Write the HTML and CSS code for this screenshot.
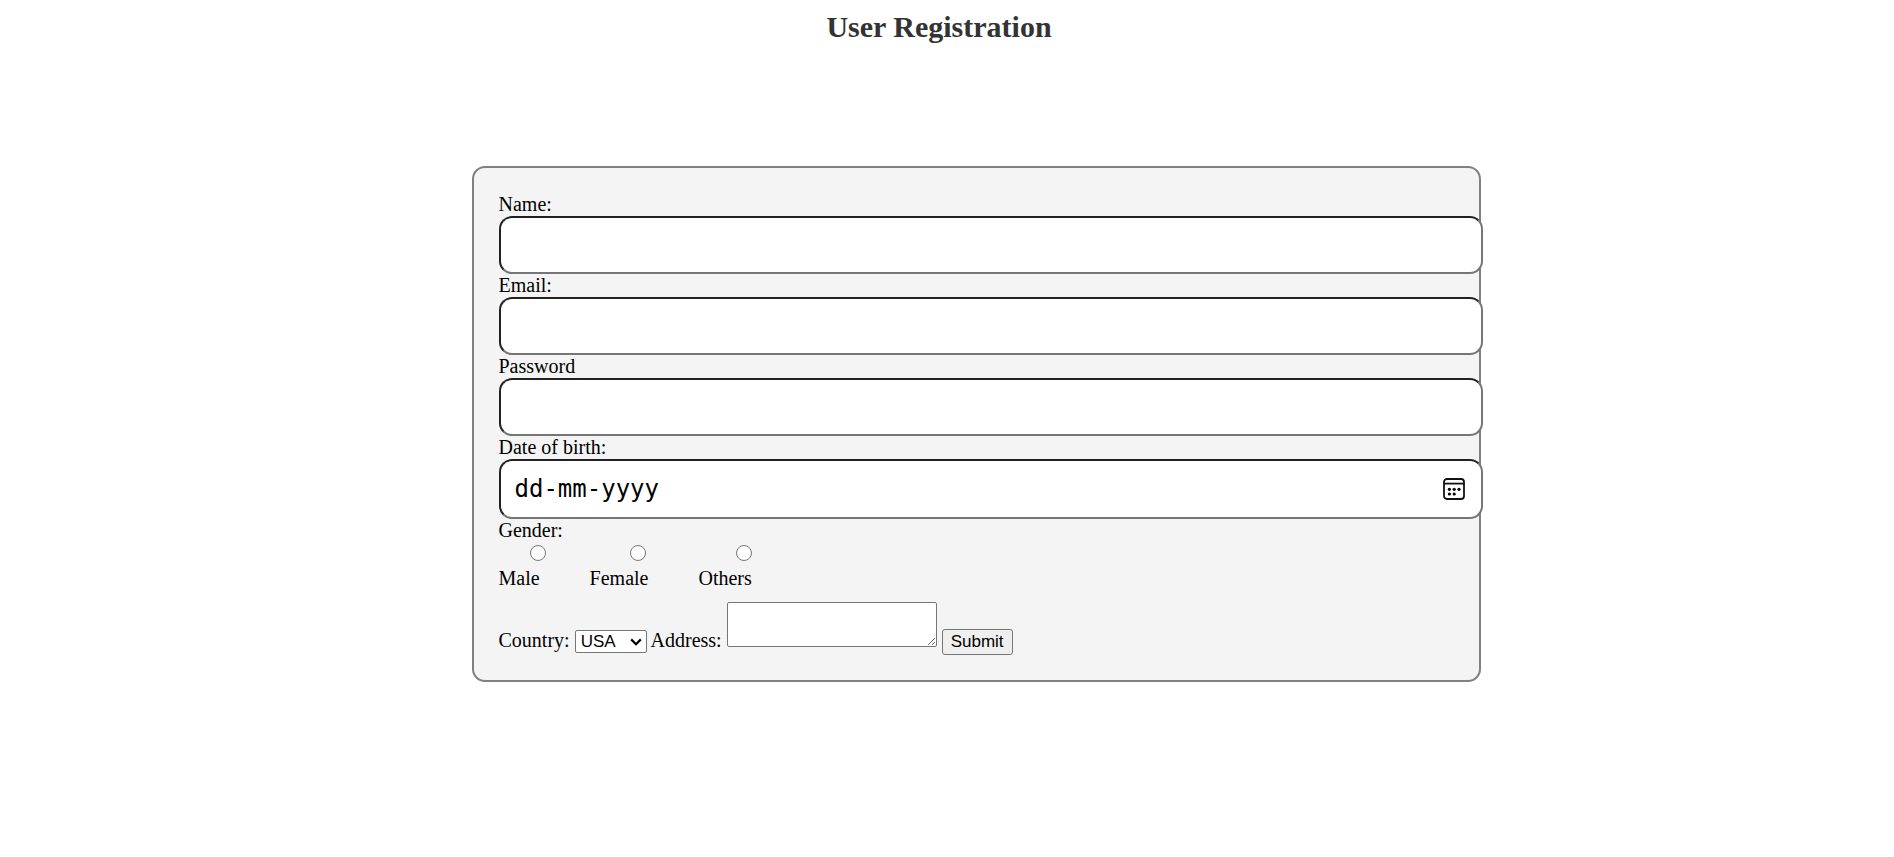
FILE: index.html
```
<!DOCTYPE html>
<html lang="en">
<head>
<meta charset="utf-8">
<title>User Registration</title>
<link rel="stylesheet" href="styles.css">
</head>
<body>
<h1 class="title">User Registration</h1>
<form class="form">
  <div class="field">
    <label for="name">Name:</label>
    <input class="box" type="text" id="name">
  </div>
  <div class="field">
    <label for="email">Email:</label>
    <input class="box" type="email" id="email">
  </div>
  <div class="field">
    <label for="password">Password</label>
    <input class="box" type="password" id="password">
  </div>
  <div class="field">
    <label for="dob">Date of birth:</label>
    <div class="date">
      <input class="box date-box" type="text" id="dob" placeholder="dd-mm-yyyy">
      <button class="picker" type="button" aria-label="Show date picker">
        <svg width="22" height="22" viewBox="0 0 22 22">
          <rect x="1" y="1" width="20" height="20" rx="3" fill="none" stroke="#111" stroke-width="1.8"/>
          <path d="M1 5.6H21" stroke="#111" stroke-width="1.8"/>
          <g fill="#000"><circle cx="6.4" cy="11.3" r="1.6"/><circle cx="11.2" cy="11.3" r="1.6"/><circle cx="16" cy="11.3" r="1.6"/><circle cx="6.4" cy="16" r="1.6"/><circle cx="11.2" cy="16" r="1.6"/></g>
        </svg>
      </button>
    </div>
  </div>
  <div>Gender:</div>
  <div class="genders">
    <label class="gender"><input class="radio" type="radio" name="gender"><span class="gender-name">Male</span></label>
    <label class="gender"><input class="radio" type="radio" name="gender"><span class="gender-name">Female</span></label>
    <label class="gender"><input class="radio" type="radio" name="gender"><span class="gender-name">Others</span></label>
  </div>
  <div class="last-row">
    <label for="country">Country:</label>
    <span class="select"><select class="country" id="country"><option>USA</option></select><svg class="arrow" width="12" height="8" viewBox="0 0 12 8"><path d="M1.2 1.4L6 6.2L10.8 1.4" fill="none" stroke="#000" stroke-width="2.2"/></svg></span>
    <label for="address">Address:</label>
    <textarea class="address" id="address"></textarea>
    <button class="submit" type="submit">Submit</button>
  </div>
</form>
</body>
</html>
```
FILE: styles.css
```
* { box-sizing: border-box; }
body {
  margin: 0 16px 0 0;
  background: #fff;
  color: #000;
  font: 20px/23px "Liberation Serif", "Times New Roman", serif;
}
.title {
  margin: 0;
  padding-top: 10px;
  font-size: 30px;
  line-height: 34px;
  text-align: center;
  color: #333;
}
.form {
  margin: 122px calc(21% + 3px) 0 calc(25% + 2px);
  padding: 25px;
  border: 2px solid #808080;
  border-radius: 13px;
  background: #f4f4f4;
}
.field label { display: block; }
.box {
  display: block;
  width: calc(100% + 29px);
  height: 58px;
  padding: 0 14px;
  border: 2px inset #767676;
  border-radius: 13px;
  background: #fff;
  font-size: 24px;
}
.date {
  display: grid;
  align-items: center;
}
.date-box, .picker { grid-area: 1 / 1; }
.date-box {
  height: 60px;
  font-family: "DejaVu Sans Mono", monospace;
}
.date-box::placeholder { color: #000; }
.picker {
  justify-self: end;
  display: flex;
  padding: 0;
  border: 0;
  background: none;
  margin-right: -11px;
}
.genders {
  display: flex;
  gap: 12px;
  padding-top: 3px;
}
.gender {
  display: flex;
  flex-direction: column;
  align-items: center;
  gap: 6px;
}
.gender-name { padding-right: 38px; }
.radio {
  width: 16px;
  height: 16px;
  margin: 0;
}
.last-row { padding-top: 12px; }
.country, .submit, .address {
  font: 17px/19px "Liberation Sans", Arial, sans-serif;
}
.select {
  display: inline-grid;
  align-items: center;
}
.country, .arrow { grid-area: 1 / 1; }
.country {
  appearance: none;
  width: 72px;
  height: 23px;
  padding: 0 5px;
  border: 1px solid #767676;
  border-radius: 2px;
  background: #fff;
  color: #000;
}
.arrow {
  justify-self: end;
  margin-right: 5px;
  pointer-events: none;
}
.address {
  width: 210px;
  height: 45px;
  border: 1px solid #767676;
  border-radius: 2px;
}
.submit {
  height: 26px;
  padding: 1px 8px;
  border: 1px solid #767676;
  border-radius: 3px;
  background: #efefef;
  color: #000;
}
```
